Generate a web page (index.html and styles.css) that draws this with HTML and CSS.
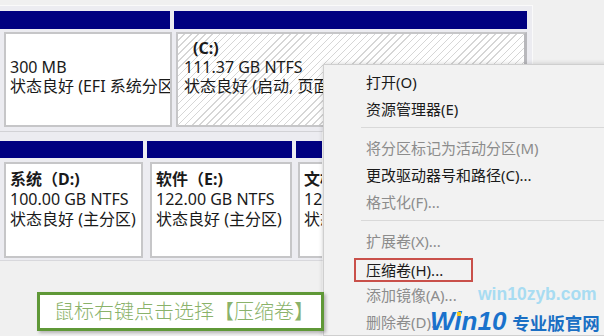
FILE: index.html
```html
<!DOCTYPE html>
<html lang="zh-CN">
<head>
    <meta charset="UTF-8">
    <meta name="viewport" content="width=device-width, initial-scale=1.0">
    <title>磁盘管理 - 压缩卷</title>
    <link rel="stylesheet" href="styles.css">
</head>
<body>

    <div class="screen">
        <!-- 磁盘 0 -->
        <div class="disk-row disk-top">
            <div class="part part-efi">
                <div class="band"></div>
                <div class="box">
                    <div class="line">&nbsp;</div>
                    <div class="line">300 MB</div>
                    <div class="line">状态良好 (EFI 系统分区)</div>
                </div>
            </div>
            <div class="part part-c">
                <div class="band"></div>
                <div class="box hatched">
                    <div class="line name name-c">(C:)</div>
                    <div class="line">111.37 GB NTFS</div>
                    <div class="line">状态良好 (启动, 页面文件, 故障转储, 主分区)</div>
                </div>
            </div>
        </div>

        <!-- 磁盘 1 -->
        <div class="disk-row disk-bottom">
            <div class="part part-d">
                <div class="band"></div>
                <div class="box">
                    <div class="line name">系统（D:)</div>
                    <div class="line">100.00 GB NTFS</div>
                    <div class="line">状态良好 (主分区)</div>
                </div>
            </div>
            <div class="part part-e">
                <div class="band"></div>
                <div class="box">
                    <div class="line name">软件（E:)</div>
                    <div class="line">122.00 GB NTFS</div>
                    <div class="line">状态良好 (主分区)</div>
                </div>
            </div>
            <div class="part part-f">
                <div class="band"></div>
                <div class="box">
                    <div class="line name">文档（F:)</div>
                    <div class="line">122.00 GB NTFS</div>
                    <div class="line">状态良好 (主分区)</div>
                </div>
            </div>
        </div>

        <div class="bottom-strip"></div>
    </div>

    <!-- 右键菜单 -->
    <ul class="context-menu">
        <li class="item">打开(O)</li>
        <li class="item">资源管理器(E)</li>
        <li class="sep"></li>
        <li class="item disabled">将分区标记为活动分区(M)</li>
        <li class="item">更改驱动器号和路径(C)...</li>
        <li class="item disabled">格式化(F)...</li>
        <li class="sep"></li>
        <li class="item disabled">扩展卷(X)...</li>
        <li class="item"><span class="highlight">压缩卷(H)...</span></li>
        <li class="item disabled">添加镜像(A)...</li>
        <li class="item disabled">删除卷(D)...</li>
    </ul>

    <!-- 提示框 -->
    <div class="tip">鼠标右键点击选择【压缩卷】</div>

    <!-- 水印 -->
    <div class="watermark">
        <div class="wm-url">win10zyb.com</div>
        <div class="wm-logo">
            <span class="wm-win">Win10</span>
            <span class="wm-cn">专业版官网</span>
            <span class="wm-dot"></span>
        </div>
    </div>

</body>
</html>
```

FILE: styles.css
```css
/* Reset */
* {
    margin: 0;
    padding: 0;
    box-sizing: border-box;
}

body {
    width: 604px;
    height: 336px;
    overflow: hidden;
    position: relative;
    background-color: #f0f0f0;
    font-family: "Noto Sans", "Noto Sans CJK SC", sans-serif;
    font-size: 16px;
    color: #1a1a1a;
}

.screen {
    padding-top: 5px;
}

/* Baris disk */
.disk-row {
    display: flex;
    width: 533px;
    background-color: #ececf1;
    border-right: 1px solid #fafafa;
}

.disk-top {
    height: 126px;
    padding-top: 5px;
    gap: 2px;
    border-top: 1px solid #fafafa;
}

.disk-bottom {
    width: 323px;
    height: 129px;
    padding-top: 9px;
    gap: 3px;
    border-top: 1px solid #d2d2d6;
}

.part {
    display: flex;
    flex-direction: column;
    flex-shrink: 0;
}

.band {
    background-color: #000080;
}

.disk-top .band {
    height: 18px;
    margin-bottom: 3px;
}

.disk-bottom .band {
    height: 17px;
    margin-bottom: 4px;
}

.box {
    background-color: #fff;
    border: 2px solid #c6c6c8;
    padding: 5px 0 0 4px;
    overflow: hidden;
}

.disk-top .box {
    height: 95px;
}

.disk-bottom .box {
    height: 96px;
    padding-top: 5px;
}

.disk-bottom .line {
    line-height: 20px;
}

.hatched {
    background-image: repeating-linear-gradient(135deg, #fff 0, #fff 4px, #d6d6d6 4px, #d6d6d6 5px);
    border-right: 3px solid #b8b8bc;
}

.line {
    line-height: 19px;
    white-space: nowrap;
}

.name {
    font-weight: bold;
}

.name-c {
    margin-left: 9px;
}

.part-efi { width: 172px; }
.part-efi .band { margin-right: 2px; }
.part-efi .box { margin-left: 4px; }

.part-c { width: 353px; }
.part-c .box { margin-left: 2px; padding-left: 6px; }

.part-d { width: 144px; }
.part-d .band { margin-right: 1px; }
.part-d .box { margin-left: 4px; margin-right: 1px; }

.part-e { width: 146px; }
.part-e .band { margin-right: 1px; }
.part-e .box { margin-left: 3px; margin-right: 1px; }

.part-f {
    flex: 1 1 0;
    min-width: 0;
}
.part-f .box { margin-left: 2px; border-right: none; }

.bottom-strip {
    width: 323px;
    height: 76px;
    border-top: 1px solid #d8d8dc;
    border-right: 1px solid #fafafa;
}

/* Menu klik kanan */
.context-menu {
    position: absolute;
    left: 323px;
    top: 64px;
    width: 290px;
    height: 272px;
    overflow: hidden;
    list-style: none;
    padding-top: 4px;
    background-color: #f2f2f2;
    border: 1px solid #cfcfcf;
    box-shadow: 0 0 5px rgba(0, 0, 0, 0.18);
}

.context-menu .item {
    height: 27px;
    line-height: 27px;
    padding-left: 42px;
    font-size: 15px;
    white-space: nowrap;
}

.context-menu .disabled {
    color: #8c8c8c;
}

.context-menu .sep {
    height: 1px;
    margin: 4px 0 7px 37px;
    background-color: #d9d9d9;
}

.highlight {
    display: inline-block;
    width: 119px;
    height: 24px;
    line-height: 20px;
    margin-left: -12px;
    padding-left: 10px;
    border: 2px solid #c9504a;
    vertical-align: middle;
}

/* Kotak petunjuk */
.tip {
    position: absolute;
    left: 37px;
    top: 292px;
    width: 287px;
    height: 39px;
    padding-left: 14px;
    background-color: #fff;
    border: 3px solid #5f9837;
    box-shadow: 2px 2px 3px rgba(0, 0, 0, 0.25);
    color: #8ab26a;
    font-family: "Noto Sans CJK SC", serif;
    font-size: 20px;
    font-weight: 300;
    line-height: 32px;
    white-space: nowrap;
}

/* Watermark */
.watermark {
    position: absolute;
    left: 430px;
    top: 284px;
}

.wm-url {
    margin-left: 48px;
    font-family: "Liberation Sans", Arial, sans-serif;
    font-size: 17.5px;
    font-weight: bold;
    line-height: 20px;
    color: #a8dcf2;
}

.wm-logo {
    position: relative;
    display: flex;
    align-items: baseline;
    gap: 6px;
    margin-top: 3px;
    white-space: nowrap;
}

.wm-win {
    font-family: "Liberation Sans", Arial, sans-serif;
    font-size: 26px;
    font-weight: bold;
    font-style: italic;
    line-height: 28px;
    color: #1a72cc;
}

.wm-cn {
    font-family: "Noto Sans CJK SC", sans-serif;
    font-size: 17.5px;
    font-weight: bold;
    color: #1a6fc4;
}

.wm-dot {
    position: absolute;
    left: 27px;
    top: 5px;
    width: 4px;
    height: 4px;
    background-color: #f5c518;
}
```
